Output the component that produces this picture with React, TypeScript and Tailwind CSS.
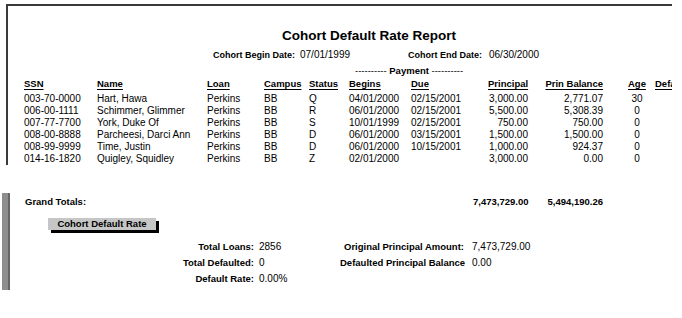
import React from "react";

type Row = {
  ssn: string;
  name: string;
  loan: string;
  campus: string;
  status: string;
  begins: string;
  due: string;
  principal: string;
  balance: string;
  age: string;
};

const rows: Row[] = [
  { ssn: "003-70-0000", name: "Hart, Hawa", loan: "Perkins", campus: "BB", status: "Q", begins: "04/01/2000", due: "02/15/2001", principal: "3,000.00", balance: "2,771.07", age: "30" },
  { ssn: "006-00-1111", name: "Schimmer, Glimmer", loan: "Perkins", campus: "BB", status: "R", begins: "06/01/2000", due: "02/15/2001", principal: "5,500.00", balance: "5,308.39", age: "0" },
  { ssn: "007-77-7700", name: "York, Duke Of", loan: "Perkins", campus: "BB", status: "S", begins: "10/01/1999", due: "02/15/2001", principal: "750.00", balance: "750.00", age: "0" },
  { ssn: "008-00-8888", name: "Parcheesi, Darci Ann", loan: "Perkins", campus: "BB", status: "D", begins: "06/01/2000", due: "03/15/2001", principal: "1,500.00", balance: "1,500.00", age: "0" },
  { ssn: "008-99-9999", name: "Time, Justin", loan: "Perkins", campus: "BB", status: "D", begins: "06/01/2000", due: "10/15/2001", principal: "1,000.00", balance: "924.37", age: "0" },
  { ssn: "014-16-1820", name: "Quigley, Squidley", loan: "Perkins", campus: "BB", status: "Z", begins: "02/01/2000", due: "", principal: "3,000.00", balance: "0.00", age: "0" },
];

const grid =
  "grid grid-cols-[73px_110px_57px_45px_40px_62px_77px_40px_75px_52px_60px]";

const H = ({ children, right }: { children: React.ReactNode; right?: boolean }) => (
  <div className={`font-bold text-[9.5px] underline underline-offset-[2px] whitespace-nowrap ${right ? "text-right" : ""}`}>
    {children}
  </div>
);

export default function App() {
  return (
    <div className="w-[682px] h-[318px] bg-white overflow-hidden text-black font-['Liberation_Sans',Arial,sans-serif] text-[10px] leading-[12px]">
      {/* Top report frame */}
      <div className="ml-[6px] mt-[4px] w-[666px] h-[161px] border-t-2 border-l-2 border-[#3a3a3a] overflow-hidden">
        <div className="ml-[274px] mt-[22px] font-bold text-[13.5px] leading-[16px] whitespace-nowrap">
          Cohort Default Rate Report
        </div>
        <div className="mt-[5px] flex whitespace-nowrap">
          <span className="ml-[205px] w-[87px] font-bold text-[9px]">Cohort Begin Date:</span>
          <span className="w-[108px]">07/01/1999</span>
          <span className="w-[81px] font-bold text-[9px]">Cohort End Date:</span>
          <span>06/30/2000</span>
        </div>
        <div className="mt-[4px] ml-[347px] whitespace-nowrap text-[9.5px]">
          ---------- <span className="font-bold">Payment</span> ----------
        </div>
        <div className={`${grid} ml-[16px] mt-[1px]`}>
          <H>SSN</H>
          <H>Name</H>
          <H>Loan</H>
          <H>Campus</H>
          <H>Status</H>
          <H>Begins</H>
          <H>Due</H>
          <H right>Principal</H>
          <H right>Prin Balance</H>
          <div className="pl-[25px]"><H>Age</H></div>
          <H>Default</H>
        </div>
        <div className="mt-[3px] ml-[16px]">
          {rows.map((r) => (
            <div key={r.ssn} className={`${grid} whitespace-nowrap`}>
              <div>{r.ssn}</div>
              <div>{r.name}</div>
              <div>{r.loan}</div>
              <div>{r.campus}</div>
              <div>{r.status}</div>
              <div>{r.begins}</div>
              <div>{r.due}</div>
              <div className="text-right">{r.principal}</div>
              <div className="text-right">{r.balance}</div>
              <div className="pl-[25px]">
                <div className="w-[18px] text-center">{r.age}</div>
              </div>
              <div></div>
            </div>
          ))}
        </div>
      </div>

      {/* Totals section */}
      <div className="mt-[28px] flex">
        <div className="ml-[2px] w-[8px] h-[97px] bg-[#8e8e8e] border-r-2 border-[#666]" />
        <div className="flex-1">
          <div className="pt-[3px] flex whitespace-nowrap font-bold text-[9.5px]">
            <span className="ml-[15px] w-[448px]">Grand Totals:</span>
            <span className="w-[54px] text-right">7,473,729.00</span>
            <span className="w-[76px] text-right">5,494,190.26</span>
          </div>
          <div className="mt-[10px] ml-[38px] w-[108px] h-[12px] bg-[#c6c6c6] shadow-[3px_3px_0_#000] text-center font-bold text-[9.5px] leading-[12px]">
            Cohort Default Rate
          </div>
          <div className="mt-[9px] grid grid-cols-[244px_86px_124px_auto] gap-x-0 whitespace-nowrap leading-[16px]">
            <div className="text-right font-bold text-[9.5px]">Total Loans:</div>
            <div className="pl-[5px]">2856</div>
            <div className="text-right font-bold text-[9.5px]">Original Principal Amount:</div>
            <div className="pl-[8px]">7,473,729.00</div>

            <div className="text-right font-bold text-[9.5px]">Total Defaulted:</div>
            <div className="pl-[5px]">0</div>
            <div className="text-right font-bold text-[9.5px]">Defaulted Principal Balance</div>
            <div className="pl-[8px]">0.00</div>

            <div className="text-right font-bold text-[9.5px]">Default Rate:</div>
            <div className="pl-[5px]">0.00%</div>
            <div></div>
            <div></div>
          </div>
        </div>
      </div>
    </div>
  );
}
